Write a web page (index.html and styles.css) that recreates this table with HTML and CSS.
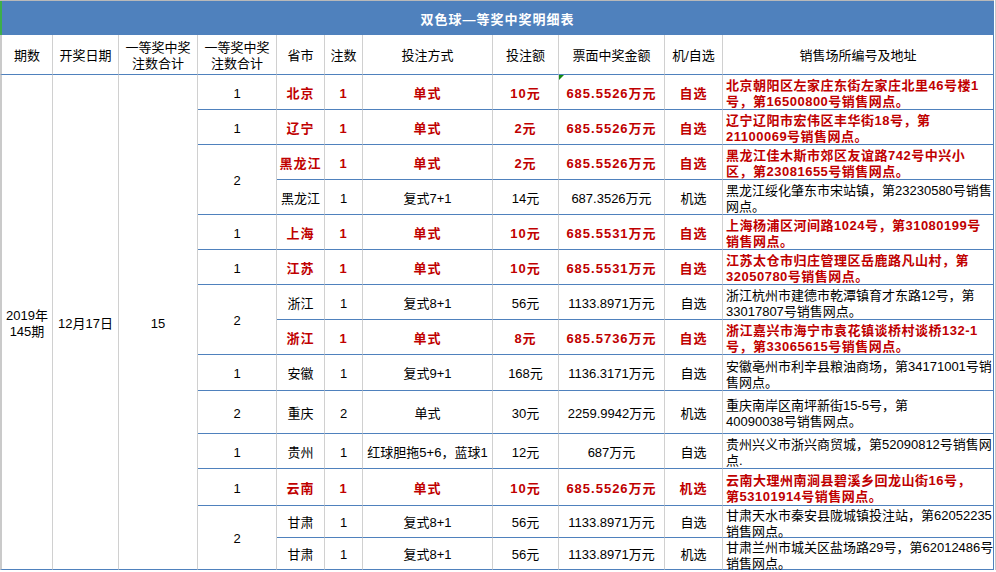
FILE: index.html
```html
<!DOCTYPE html>
<html lang="zh-CN">
<head>
<meta charset="utf-8">
<title>双色球一等奖中奖明细表</title>
<link rel="stylesheet" href="styles.css">
</head>
<body>
<div class="sheet">
<table class="prize">
<colgroup>
<col class="c-issue"><col class="c-date"><col class="c-total"><col class="c-sub"><col class="c-prov"><col class="c-bets"><col class="c-type"><col class="c-amt"><col class="c-prize"><col class="c-pick"><col class="c-addr">
</colgroup>
<thead>
<tr class="r-title"><th colspan="11" class="title">双色球—等奖中奖明细表</th></tr>
<tr class="r-head">
<th class="first">期数</th>
<th>开奖日期</th>
<th>一等奖中奖<br>注数合计</th>
<th>一等奖中奖<br>注数合计</th>
<th>省市</th>
<th>注数</th>
<th>投注方式</th>
<th>投注额</th>
<th>票面中奖金额</th>
<th>机/自选</th>
<th class="addr-h">销售场所编号及地址</th>
</tr>
</thead>
<tbody>
<tr>
<td rowspan="14" class="first">2019年<br>145期</td>
<td rowspan="14">12月17日</td>
<td rowspan="14">15</td>
<td>1</td>
<td class="hl">北京</td><td class="hl">1</td><td class="hl">单式</td><td class="hl">10元</td><td class="hl flag">685.5526万元</td><td class="hl">自选</td>
<td class="addr hl"><div class="lines">北京朝阳区左家庄东街左家庄北里46号楼1<br>号，第16500800号销售网点。</div></td>
</tr>
<tr>
<td>1</td>
<td class="hl">辽宁</td><td class="hl">1</td><td class="hl">单式</td><td class="hl">2元</td><td class="hl">685.5526万元</td><td class="hl">自选</td>
<td class="addr hl"><div class="lines">辽宁辽阳市宏伟区丰华街18号，第<br>21100069号销售网点。</div></td>
</tr>
<tr>
<td rowspan="2">2</td>
<td class="hl">黑龙江</td><td class="hl">1</td><td class="hl">单式</td><td class="hl">2元</td><td class="hl">685.5526万元</td><td class="hl">自选</td>
<td class="addr hl"><div class="lines">黑龙江佳木斯市郊区友谊路742号中兴小<br>区，第23081655号销售网点。</div></td>
</tr>
<tr>
<td>黑龙江</td><td>1</td><td>复式7+1</td><td>14元</td><td>687.3526万元</td><td>机选</td>
<td class="addr"><div class="lines">黑龙江绥化肇东市宋站镇，第23230580号销售<br>网点。</div></td>
</tr>
<tr>
<td>1</td>
<td class="hl">上海</td><td class="hl">1</td><td class="hl">单式</td><td class="hl">10元</td><td class="hl">685.5531万元</td><td class="hl">自选</td>
<td class="addr hl"><div class="lines">上海杨浦区河间路1024号，第31080199号<br>销售网点。</div></td>
</tr>
<tr>
<td>1</td>
<td class="hl">江苏</td><td class="hl">1</td><td class="hl">单式</td><td class="hl">10元</td><td class="hl">685.5531万元</td><td class="hl">自选</td>
<td class="addr hl"><div class="lines">江苏太仓市归庄管理区岳鹿路凡山村，第<br>32050780号销售网点。</div></td>
</tr>
<tr>
<td rowspan="2">2</td>
<td>浙江</td><td>1</td><td>复式8+1</td><td>56元</td><td>1133.8971万元</td><td>自选</td>
<td class="addr"><div class="lines">浙江杭州市建德市乾潭镇育才东路12号，第<br>33017807号销售网点。</div></td>
</tr>
<tr>
<td class="hl">浙江</td><td class="hl">1</td><td class="hl">单式</td><td class="hl">8元</td><td class="hl">685.5736万元</td><td class="hl">自选</td>
<td class="addr hl"><div class="lines">浙江嘉兴市海宁市袁花镇谈桥村谈桥132-1<br>号，第33065615号销售网点。</div></td>
</tr>
<tr class="h36">
<td>1</td>
<td>安徽</td><td>1</td><td>复式9+1</td><td>168元</td><td>1136.3171万元</td><td>自选</td>
<td class="addr"><div class="lines">安徽亳州市利辛县粮油商场，第34171001号销<br>售网点。</div></td>
</tr>
<tr class="h43">
<td>2</td>
<td>重庆</td><td>2</td><td>单式</td><td>30元</td><td>2259.9942万元</td><td>机选</td>
<td class="addr"><div class="lines">重庆南岸区南坪新街15-5号，第<br>40090038号销售网点。</div></td>
</tr>
<tr>
<td>1</td>
<td>贵州</td><td>1</td><td>红球胆拖5+6，蓝球1</td><td>12元</td><td>687万元</td><td>自选</td>
<td class="addr"><div class="lines">贵州兴义市浙兴商贸城，第52090812号销售网<br>点.</div></td>
</tr>
<tr class="h37">
<td>1</td>
<td class="hl">云南</td><td class="hl">1</td><td class="hl">单式</td><td class="hl">10元</td><td class="hl">685.5526万元</td><td class="hl">机选</td>
<td class="addr hl"><div class="lines">云南大理州南涧县碧溪乡回龙山街16号，<br>第53101914号销售网点。</div></td>
</tr>
<tr class="h32">
<td rowspan="2">2</td>
<td>甘肃</td><td>1</td><td>复式8+1</td><td>56元</td><td>1133.8971万元</td><td>自选</td>
<td class="addr"><div class="lines">甘肃天水市秦安县陇城镇投注站，第62052235<br>销售网点。</div></td>
</tr>
<tr class="h32">
<td>甘肃</td><td>1</td><td>复式8+1</td><td>56元</td><td>1133.8971万元</td><td>机选</td>
<td class="addr"><div class="lines">甘肃兰州市城关区盐场路29号，第62012486号<br>销售网点。</div></td>
</tr>
</tbody>
</table>
</div>
</body>
</html>
```

FILE: styles.css
```css
html, body {
  margin: 0;
  padding: 0;
  background: #ffffff;
}

body {
  font-family: "Liberation Sans", "Noto Sans CJK SC", sans-serif;
  font-size: 13px;
  color: #000000;
}

.sheet {
  width: 994px;
  padding-right: 1px;
  border-right: 1px solid #c8c8c8;
}

.prize {
  width: 994px;
  table-layout: fixed;
  border-collapse: separate;
  border-spacing: 0;
  border-top: 1px solid #b9b9b9;
}

.c-issue { width: 53px; }
.c-date { width: 66px; }
.c-total { width: 79px; }
.c-sub { width: 79px; }
.c-prov { width: 48px; }
.c-bets { width: 38px; }
.c-type { width: 130px; }
.c-amt { width: 66px; }
.c-prize { width: 106px; }
.c-pick { width: 58px; }
.c-addr { width: 271px; }

.prize th,
.prize td {
  padding: 3px 2px 0;
  border-right: 1px solid #d0d0d0;
  border-bottom: 1px solid #4f81bd;
  vertical-align: middle;
  text-align: center;
  line-height: 16px;
  font-weight: normal;
  white-space: nowrap;
  overflow: visible;
}

tr { height: 35px; }
.r-title { height: 34px; }
.r-head { height: 40px; }
.h36 { height: 36px; }
.h43 { height: 43px; }
.h37 { height: 37px; }
.h32 { height: 32px; }

.prize th.title {
  background: #4f81bd;
  color: #ffffff;
  font-weight: bold;
  letter-spacing: 1px;
  padding-top: 4px;
  border-left: 2px solid #3dae4a;
  border-right: 1px solid #4f81bd;
  border-bottom: 0;
}

.prize .first {
  border-left: 2px solid #cacaca;
}

.prize .addr-h {
  border-right-color: #4f81bd;
}

.prize td.addr {
  text-align: left;
  padding: 0 0 0 3px;
  border-right-color: #4f81bd;
}

.addr .lines {
  height: 28px;
  line-height: 16px;
}

.prize td.hl {
  color: #c00000;
  font-weight: bold;
  letter-spacing: 1px;
}

.prize td.addr.hl {
  letter-spacing: 0.5px;
}

.prize td.flag {
  position: relative;
}

.prize td.flag::before {
  content: "";
  position: absolute;
  left: 0;
  top: 0;
  border-top: 5px solid #138a13;
  border-right: 5px solid transparent;
}
```
